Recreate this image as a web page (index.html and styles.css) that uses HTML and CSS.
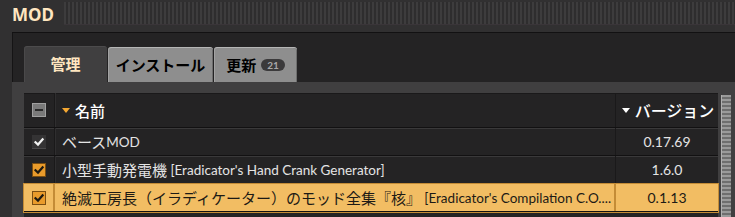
FILE: index.html
```html
<!DOCTYPE html>
<html lang="ja">
<head>
<meta charset="utf-8">
<link rel="stylesheet" href="styles.css">
</head>
<body>
<div class="window">
  <div class="titlebar">
    <div class="title">MOD</div>
    <div class="drag"></div>
  </div>
  <div class="frame">
    <div class="tabs">
      <div class="tab active">管理</div>
      <div class="tab">インストール</div>
      <div class="tab">更新 <span class="badge">21</span></div>
    </div>
    <div class="content">
      <div class="tablewrap">
        <div class="table">
          <div class="row head">
            <div class="c-check"><span class="cb cb-mixed"></span></div>
            <div class="c-name"><span class="sort"></span>名前</div>
            <div class="c-ver"><span class="sort"></span>バージョン</div>
          </div>
          <div class="row">
            <div class="c-check"><span class="cb cb-dark"><svg viewBox="0 0 14 14"><path d="M3.5 7.2 L6 9.6 L10.6 4.4" /></svg></span></div>
            <div class="c-name">ベース<span class="en">MOD</span></div>
            <div class="c-ver">0.17.69</div>
          </div>
          <div class="row">
            <div class="c-check"><span class="cb cb-orange"><svg viewBox="0 0 14 14"><path d="M3.5 7.2 L6 9.6 L10.6 4.4" /></svg></span></div>
            <div class="c-name">小型手動発電機 <span class="en">[Eradicator's Hand Crank Generator]</span></div>
            <div class="c-ver">1.6.0</div>
          </div>
          <div class="row selected">
            <div class="c-check"><span class="cb cb-orange"><svg viewBox="0 0 14 14"><path d="M3.5 7.2 L6 9.6 L10.6 4.4" /></svg></span></div>
            <div class="c-name">絶滅工房長（イラディケーター）のモッド全集『核』 <span class="en">[Eradicator's Compilation C.O....</span></div>
            <div class="c-ver">0.1.13</div>
          </div>
        </div>
        <div class="scrollbar"></div>
      </div>
    </div>
  </div>
</div>
</body>
</html>
```

FILE: styles.css
```css
html, body {
  margin: 0;
  padding: 0;
  background: #313031;
  width: 735px;
  height: 217px;
  overflow: hidden;
  font-family: "Lato", "Noto Sans CJK JP", sans-serif;
}
.window {
  width: 735px;
  height: 217px;
  display: flex;
  flex-direction: column;
}
.titlebar {
  height: 32px;
  display: flex;
  align-items: flex-start;
  flex: none;
}
.title {
  padding-left: 12px;
  padding-top: 4px;
  font-family: "Noto Sans", "Noto Sans CJK JP", sans-serif;
  font-weight: 700;
  font-size: 17px;
  line-height: 22px;
  color: #ffe6c0;
  width: 52px;
}
.drag {
  flex: 1;
  margin-top: 2px;
  height: 23px;
  background: repeating-linear-gradient(90deg, #3d3c3d 0 2px, #2e2d2e 2px 4px);
  box-shadow: inset 0 -1px 0 #3a3539;
}
.frame {
  flex: 1;
  margin-left: 12px;
  background: #242324;
  box-shadow: inset 0 1px 0 #121112, inset 1px 0 0 #151415;
  display: flex;
  flex-direction: column;
  min-height: 0;
}
.tabs {
  display: flex;
  align-items: flex-end;
  padding: 14px 0 0 12px;
  gap: 1px;
  height: 36px;
  flex: none;
}
.tab {
  height: 35px;
  box-sizing: border-box;
  background: #8e8e8e;
  border-top: 1px solid #b5b5b5;
  border-radius: 3px 3px 0 0;
  color: #000;
  font-family: "Noto Sans CJK JP", sans-serif;
  font-weight: 700;
  font-size: 15px;
  display: flex;
  align-items: center;
  justify-content: center;
  padding-bottom: 2px;
  box-shadow: inset 1px 0 0 #a3a3a3, inset -1px 0 0 #6e6e6e;
}
.tab:nth-child(1) { width: 83px; }
.tab:nth-child(2) { width: 105px; }
.tab:nth-child(3) { width: 83px; gap: 5px; }
.tab.active {
  height: 36px;
  background: #403f40;
  border-top: 1px solid #4c4b4c;
  color: #ffe6c0;
  box-shadow: inset 1px 0 0 #4a494a;
}
.badge {
  display: inline-block;
  background: #3b3a3b;
  color: #a8a8a8;
  font-family: "Lato", sans-serif;
  font-size: 10px;
  font-weight: 700;
  line-height: 12px;
  padding: 0 6px;
  border-radius: 6px;
  margin-top: 1px;
}
.content {
  flex: 1;
  background: #403f40;
  padding: 11px 0 0 12px;
  min-height: 0;
}
.tablewrap {
  display: flex;
  height: 100%;
  gap: 3px;
}
.table {
  width: 694px;
  background: #242324;
  box-shadow: inset 0 1px 0 #1a191a;
}
.row {
  display: flex;
  height: 28px;
  box-sizing: border-box;
  border-bottom: 1px solid #121112;
  box-shadow: 0 1px 0 #3a393a;
  position: relative;
  color: #e4e4e4;
  font-size: 15px;
}
.row.head {
  height: 35px;
  color: #fff;
  font-weight: 500;
  font-size: 16px;
  font-family: "Noto Sans CJK JP", sans-serif;
}
.row > div {
  display: flex;
  align-items: center;
  box-sizing: border-box;
}
.c-check {
  width: 31px;
  justify-content: center;
  border-right: 1px solid #1a191a;
  box-shadow: 1px 0 0 #2f2e2f;
}
.c-name {
  width: 561px;
  padding-left: 7px;
  border-right: 1px solid #1a191a;
  white-space: pre;
  overflow: hidden;
  font-family: "Noto Sans CJK JP", sans-serif;
  font-size: 15px;
}
.en {
  font-family: "Lato", sans-serif;
  font-size: 13.5px;
  margin-top: 1px;
}
.c-ver {
  width: 102px;
  justify-content: center;
  font-family: "Lato", sans-serif;
  font-size: 14px;
}
.head .c-ver {
  padding-left: 2px;
  font-family: "Noto Sans CJK JP", sans-serif;
  font-size: 16px;
}
.sort {
  width: 0;
  height: 0;
  border-left: 4px solid transparent;
  border-right: 4px solid transparent;
  border-top: 5px solid #f5a832;
  margin-right: 5px;
  margin-top: 1px;
}
.c-ver .sort { border-top-color: #ffffff; }
.cb {
  width: 14px;
  height: 14px;
  box-sizing: border-box;
  display: block;
}
.cb svg {
  width: 14px;
  height: 14px;
  display: block;
  fill: none;
  stroke-width: 2.2;
  stroke-linecap: square;
}
.cb-mixed {
  background: #7a7a7a;
  border: 1px solid #a0a0a0;
  position: relative;
}
.cb-mixed::after {
  content: "";
  position: absolute;
  left: 2px;
  right: 2px;
  top: 5px;
  height: 2px;
  background: #2a2a2a;
}
.cb-dark {
  background: #343334;
  border-bottom: 1px solid #4a494a;
}
.cb-dark svg { stroke: #f2f2f2; }
.cb-orange {
  background: #e99b2b;
  border: 1px solid #7a4e12;
}
.cb-orange svg { stroke: #1e1a12; margin: -1px; }
.row.selected {
  background: #f2bd63;
  color: #1d1a15;
  box-shadow: 0 0 0 1px #c48c36;
}
.row.selected .c-check,
.row.selected .c-name {
  border-right: 2px solid #c48c36;
  box-shadow: none;
}
.scrollbar {
  width: 10px;
  margin-top: 2px;
  background: repeating-linear-gradient(180deg, #9a9a9a 0 2px, #6e6e6e 2px 4px);
  box-shadow: inset 1px 0 0 #b0b0b0;
}
```
